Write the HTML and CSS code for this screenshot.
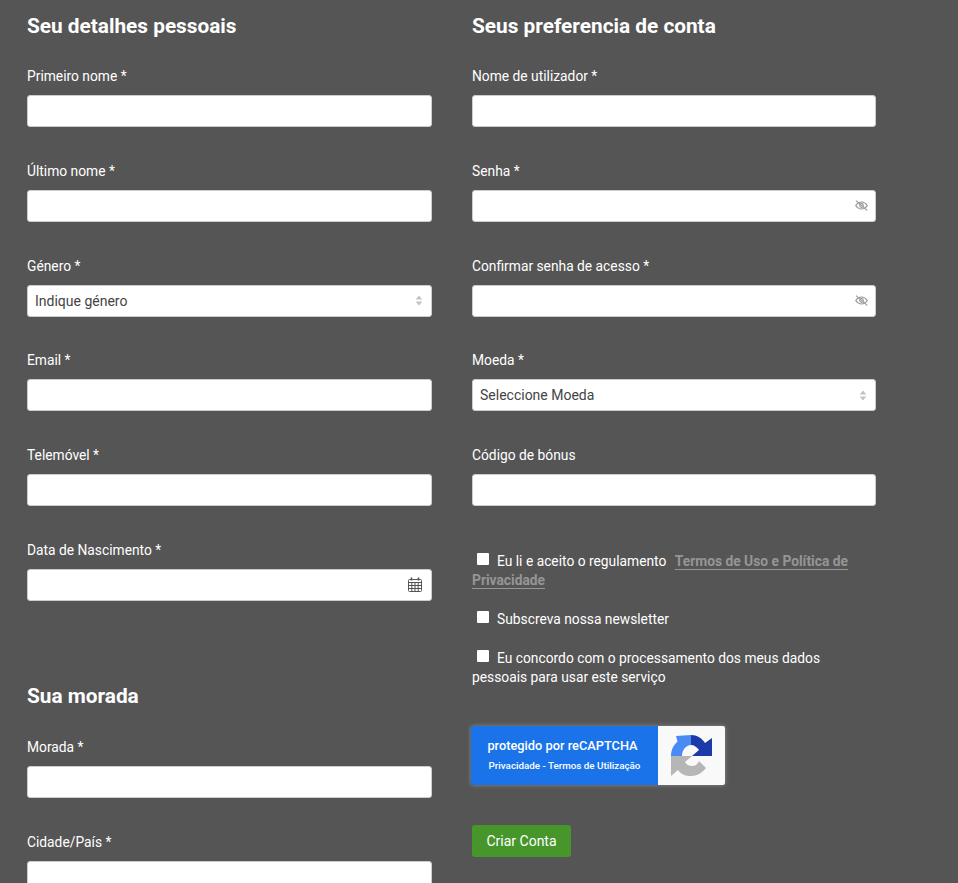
FILE: index.html
```html
<!DOCTYPE html>
<html lang="pt">
<head>
<meta charset="utf-8">
<title>Criar Conta</title>
<link rel="stylesheet" href="styles.css">
</head>
<body>
<form class="page">
  <div class="col col-left">
    <h2 class="heading">Seu detalhes pessoais</h2>
    <div class="field"><label>Primeiro nome *</label><div class="control"></div></div>
    <div class="field"><label>Último nome *</label><div class="control"></div></div>
    <div class="field"><label>Género *</label>
      <div class="control select"><span>Indique género</span>
        <svg class="sort" width="8" height="11" viewBox="0 0 8 12"><path d="M4 0.500 7.600 5H0.400zM4 11.500 0.400 7h7.200z"/></svg>
      </div></div>
    <div class="field"><label>Email *</label><div class="control"></div></div>
    <div class="field"><label>Telemóvel *</label><div class="control"></div></div>
    <div class="field"><label>Data de Nascimento *</label>
      <div class="control end">
        <svg width="14" height="15" viewBox="0 0 14 15" fill="none" stroke="#555" stroke-width="1"><rect x="0.500" y="2.500" width="13" height="12" rx="1"/><path d="M0.500 5.500h13M0.500 8.500h13M0.500 11.500h13M3.800 5.500v9M7 5.500v9M10.200 5.500v9"/><path d="M3.500 0.500v3M10.500 0.500v3" stroke-width="1.600"/></svg>
      </div></div>
    <h2 class="heading heading-sub">Sua morada</h2>
    <div class="field"><label>Morada *</label><div class="control"></div></div>
    <div class="field"><label>Cidade/País *</label><div class="control"></div></div>
  </div>
  <div class="col col-right">
    <h2 class="heading">Seus preferencia de conta</h2>
    <div class="field"><label>Nome de utilizador *</label><div class="control"></div></div>
    <div class="field"><label>Senha *</label>
      <div class="control end"><svg class="eye" width="13" height="11" viewBox="0 0 13 11" fill="none" stroke="#999" stroke-width="1.200"><path d="M0.700 5.500C2.400 3 4.300 2 6.500 2s4.100 1 5.800 3.500C10.600 8 8.700 9 6.500 9S2.400 8 0.700 5.500z"/><circle cx="6.500" cy="5.500" r="1.800"/><path d="M1 0.600 12.200 10.400"/></svg></div></div>
    <div class="field"><label>Confirmar senha de acesso *</label>
      <div class="control end"><svg class="eye" width="13" height="11" viewBox="0 0 13 11" fill="none" stroke="#999" stroke-width="1.200"><path d="M0.700 5.500C2.400 3 4.300 2 6.500 2s4.100 1 5.800 3.500C10.600 8 8.700 9 6.500 9S2.400 8 0.700 5.500z"/><circle cx="6.500" cy="5.500" r="1.800"/><path d="M1 0.600 12.200 10.400"/></svg></div></div>
    <div class="field"><label>Moeda *</label>
      <div class="control select"><span>Seleccione Moeda</span>
        <svg class="sort" width="8" height="11" viewBox="0 0 8 12"><path d="M4 0.500 7.600 5H0.400zM4 11.500 0.400 7h7.200z"/></svg>
      </div></div>
    <div class="field"><label>Código de bónus</label><div class="control"></div></div>
    <div class="checks">
      <p class="check"><span class="box"></span>Eu li e aceito o regulamento <a class="terms">Termos de Uso e Política de Privacidade</a></p>
      <p class="check"><span class="box"></span>Subscreva nossa newsletter</p>
      <p class="check"><span class="box"></span>Eu concordo com o processamento dos meus dados pessoais para usar este serviço</p>
    </div>
    <div class="recaptcha">
      <div class="rc-text">
        <div class="rc-title">protegido por reCAPTCHA</div>
        <div class="rc-links">Privacidade - Termos de Utilização</div>
      </div>
      <div class="rc-logo">
        <svg width="41" height="41" viewBox="0 0 41 41">
          <path d="M20 0V10C15 10 11 15 11 21H0C0 15 2.500 10 6.500 6.500L5 1Z" fill="#4a8af4"/>
          <path d="M20 0C26 0 31 3 34 8L41 3V21H21L28 15C26 12 23 10 20 10Z" fill="#1c3aa9"/>
          <path d="M0 21H21L14 27C16 30 18 31 21 31C24 31 26 30 28 26L35 33C31 38 26 41 20 41C14 41 10 39 7 35L0 41Z" fill="#b6b6b6"/>
        </svg>
      </div>
    </div>
    <button class="submit" type="button">Criar Conta</button>
  </div>
</form>
</body>
</html>
```
FILE: styles.css
```css
html, body {
  margin: 0;
  height: 883px;
  overflow: hidden;
  background: #555;
}
body {
  font-family: Roboto, "Liberation Sans", sans-serif;
  font-size: 13.800px;
  color: #fff;
}
.page {
  display: flex;
  gap: 40px;
  padding-left: 27px;
}
.col-left { width: 405px; }
.col-right { width: 404px; }
.heading {
  margin: 0;
  height: 66px;
  padding-top: 13px;
  box-sizing: border-box;
  font-size: 20.800px;
  line-height: 26px;
  font-weight: 700;
}
.heading-sub {
  margin-top: 28.200px;
  padding-top: 20px;
  height: 74px;
}
.field {
  height: 94.800px;
  display: flex;
  flex-direction: column;
  gap: 9px;
}
.field label {
  display: block;
  box-sizing: border-box;
  padding-top: 1px;
  line-height: 19px;
  height: 20px;
}
.control {
  height: 32px;
  box-sizing: border-box;
  background: #fff;
  border: 1px solid #ccc;
  border-radius: 3px;
  display: flex;
  align-items: center;
  padding: 0 9px 0 7px;
  font-size: 14px;
  color: #444;
}
.end { justify-content: flex-end; }
.select { justify-content: space-between; }
.sort { fill: #c2c2c2; margin-right: -1px; }
.eye { margin-right: -2px; }
.checks {
  margin-top: 12.200px;
  padding-right: 10px;
  display: flex;
  flex-direction: column;
  gap: 20px;
}
.check {
  margin: 0;
  line-height: 19px;
}
.box {
  display: inline-block;
  width: 12px;
  height: 12px;
  margin: 0 8px 1px 5px;
  background: #fff;
  border-radius: 1px;
}
.terms {
  margin-left: 5px;
  font-weight: 700;
  color: #959595;
  border-bottom: 1px solid #959595;
}
.recaptcha {
  display: flex;
  width: 254px;
  height: 59px;
  margin-top: 38.800px;
  margin-left: -1px;
  border-radius: 2px;
  overflow: hidden;
  box-shadow: 0 0 4px rgba(160, 160, 160, 0.7);
}
.rc-text {
  width: 187px;
  background: #1a73e8;
  text-align: center;
  padding-top: 11px;
  box-sizing: border-box;
}
.rc-title { font-size: 12.800px; font-weight: 500; line-height: 17px; padding-right: 4px; }
.rc-links { font-size: 9.800px; font-weight: 500; line-height: 13px; margin-top: 5px; }
.rc-logo {
  flex: 1;
  background: #f9f9f9;
  display: flex;
  align-items: center;
  justify-content: center;
}
.submit {
  display: block;
  margin-top: 40px;
  width: 99px;
  height: 32px;
  padding-top: 2px;
  border: 0;
  border-radius: 3px;
  background: #46962b;
  color: #fff;
  font-family: inherit;
  font-size: 14px;
}
```
